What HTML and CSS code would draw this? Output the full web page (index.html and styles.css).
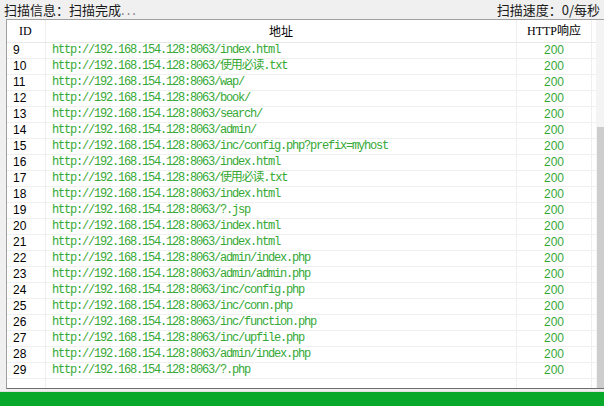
FILE: index.html
```html
<!DOCTYPE html>
<html>
<head>
<meta charset="utf-8">
<link rel="stylesheet" href="styles.css">
</head>
<body>
<div class="app">
  <div class="top">
    <span>扫描信息：扫描完成<span class="dots">...</span></span>
    <span>扫描速度：0/每秒</span>
  </div>
  <div class="panel">
    <div class="grid">
      <div class="table">
        <div class="row head">
          <div class="c id">ID</div>
          <div class="c url">地址</div>
          <div class="c code">HTTP响应</div>
          <div class="c pad"></div>
        </div>
        <div class="row"><div class="c id">9</div><div class="c url">http://192.168.154.128:8063/index.html</div><div class="c code">200</div><div class="c pad"></div></div>
        <div class="row"><div class="c id">10</div><div class="c url">http://192.168.154.128:8063/使用必读.txt</div><div class="c code">200</div><div class="c pad"></div></div>
        <div class="row"><div class="c id">11</div><div class="c url">http://192.168.154.128:8063/wap/</div><div class="c code">200</div><div class="c pad"></div></div>
        <div class="row"><div class="c id">12</div><div class="c url">http://192.168.154.128:8063/book/</div><div class="c code">200</div><div class="c pad"></div></div>
        <div class="row"><div class="c id">13</div><div class="c url">http://192.168.154.128:8063/search/</div><div class="c code">200</div><div class="c pad"></div></div>
        <div class="row"><div class="c id">14</div><div class="c url">http://192.168.154.128:8063/admin/</div><div class="c code">200</div><div class="c pad"></div></div>
        <div class="row"><div class="c id">15</div><div class="c url">http://192.168.154.128:8063/inc/config.php?prefix=myhost</div><div class="c code">200</div><div class="c pad"></div></div>
        <div class="row"><div class="c id">16</div><div class="c url">http://192.168.154.128:8063/index.html</div><div class="c code">200</div><div class="c pad"></div></div>
        <div class="row"><div class="c id">17</div><div class="c url">http://192.168.154.128:8063/使用必读.txt</div><div class="c code">200</div><div class="c pad"></div></div>
        <div class="row"><div class="c id">18</div><div class="c url">http://192.168.154.128:8063/index.html</div><div class="c code">200</div><div class="c pad"></div></div>
        <div class="row"><div class="c id">19</div><div class="c url">http://192.168.154.128:8063/?.jsp</div><div class="c code">200</div><div class="c pad"></div></div>
        <div class="row"><div class="c id">20</div><div class="c url">http://192.168.154.128:8063/index.html</div><div class="c code">200</div><div class="c pad"></div></div>
        <div class="row"><div class="c id">21</div><div class="c url">http://192.168.154.128:8063/index.html</div><div class="c code">200</div><div class="c pad"></div></div>
        <div class="row"><div class="c id">22</div><div class="c url">http://192.168.154.128:8063/admin/index.php</div><div class="c code">200</div><div class="c pad"></div></div>
        <div class="row"><div class="c id">23</div><div class="c url">http://192.168.154.128:8063/admin/admin.php</div><div class="c code">200</div><div class="c pad"></div></div>
        <div class="row"><div class="c id">24</div><div class="c url">http://192.168.154.128:8063/inc/config.php</div><div class="c code">200</div><div class="c pad"></div></div>
        <div class="row"><div class="c id">25</div><div class="c url">http://192.168.154.128:8063/inc/conn.php</div><div class="c code">200</div><div class="c pad"></div></div>
        <div class="row"><div class="c id">26</div><div class="c url">http://192.168.154.128:8063/inc/function.php</div><div class="c code">200</div><div class="c pad"></div></div>
        <div class="row"><div class="c id">27</div><div class="c url">http://192.168.154.128:8063/inc/upfile.php</div><div class="c code">200</div><div class="c pad"></div></div>
        <div class="row"><div class="c id">28</div><div class="c url">http://192.168.154.128:8063/admin/index.php</div><div class="c code">200</div><div class="c pad"></div></div>
        <div class="row"><div class="c id">29</div><div class="c url">http://192.168.154.128:8063/?.php</div><div class="c code">200</div><div class="c pad"></div></div>
        <div class="row filler"><div class="c id"></div><div class="c url"></div><div class="c code"></div><div class="c pad"></div></div>
      </div>
      <div class="scroll"><div class="thumb"></div></div>
    </div>
  </div>
  <div class="progress"></div>
</div>
</body>
</html>
```

FILE: styles.css
```css
html, body {
  margin: 0;
  padding: 0;
}
body {
  background: #f0f0f0;
  width: 604px;
  height: 406px;
  overflow: hidden;
  font-family: "Noto Sans CJK SC", "Liberation Sans", sans-serif;
}
.app {
  display: flex;
  flex-direction: column;
  height: 406px;
}
.top {
  height: 19px;
  display: flex;
  justify-content: space-between;
  align-items: center;
  padding: 0 4px 0 4px;
  font-size: 13px;
  color: #1a1a1a;
  line-height: 19px;
}
.dots {
  color: #777;
  letter-spacing: 2px;
}
.panel {
  margin-left: 6px;
  width: 610px;
  height: 370px;
  border: 1px solid #a0a0a0;
  border-bottom-color: #6e6e6e;
  background: #fff;
  overflow: hidden;
}
.grid {
  display: flex;
  height: 100%;
}
.table {
  display: flex;
  flex-direction: column;
  width: 589px;
  height: 100%;
}
.row {
  display: grid;
  grid-template-columns: 39px 471px 75px 4px;
  height: 16px;
  border-bottom: 1px solid #efefef;
  box-sizing: border-box;
  font-size: 12px;
  line-height: 15px;
}
.row.head {
  height: 23px;
  border-bottom: 1px solid #e8e8e8;
  line-height: 22px;
  font-family: "Liberation Serif", "Noto Sans CJK SC", serif;
  font-size: 12px;
  color: #000;
}
.row.filler {
  flex: 1;
  border-bottom: none;
}
.c {
  border-right: 1px solid #efefef;
  white-space: nowrap;
  overflow: hidden;
}
.c.pad {
  border-right: none;
}
.id {
  padding-left: 6px;
  font-family: "Liberation Sans", sans-serif;
  color: #000;
}
.head .id {
  padding-left: 12px;
  font-family: "Liberation Serif", serif;
}
.url {
  padding-left: 6px;
  color: #35a835;
  font-family: "Liberation Mono", "Noto Sans CJK SC", monospace;
  letter-spacing: -1.2px;
}
.head .url {
  text-align: center;
  color: #000;
  font-family: "Noto Sans CJK SC", serif;
  letter-spacing: 0;
  padding-left: 0;
}
.code {
  text-align: center;
  color: #35a835;
  font-family: "Liberation Sans", sans-serif;
}
.head .code {
  color: #000;
  font-family: "Liberation Serif", "Noto Sans CJK SC", serif;
}
.scroll {
  width: 17px;
  background: #f4f4f4;
  display: flex;
  flex-direction: column;
  padding-top: 107px;
  box-sizing: border-box;
}
.thumb {
  width: 8px;
  height: 262px;
  background: #cdcdcd;
  margin-left: 1px;
}
.progress {
  margin-top: 2px;
  height: 14px;
  background: #08a82a;
  border-top: 1px solid #e0e0e0;
}
```
